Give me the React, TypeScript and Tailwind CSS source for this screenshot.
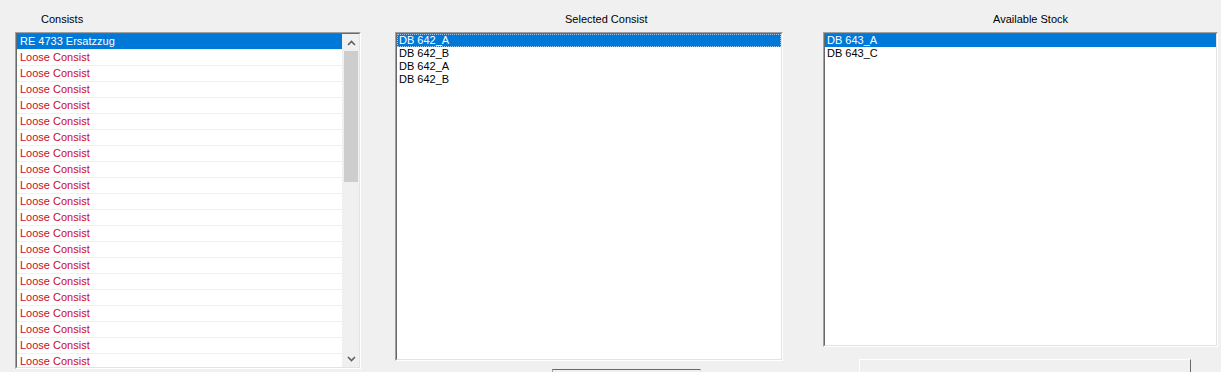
import React from "react";

const font = { fontFamily: '"Liberation Sans", Arial, sans-serif' };

function Sunken({ className, children }: { className: string; children: React.ReactNode }) {
  return (
    <div className={`border border-t-[#a0a0a0] border-l-[#a0a0a0] border-b-[#ffffff] border-r-[#ffffff] ${className}`}>
      <div className="h-full border border-t-[#696969] border-l-[#696969] border-b-[#e3e3e3] border-r-[#e3e3e3] bg-white overflow-hidden">
        {children}
      </div>
    </div>
  );
}

export default function App() {
  const loose = Array.from({ length: 20 });
  return (
    <div className="w-[1221px] h-[420px] bg-[#f0f0f0] text-[11px] text-black flex pl-[15px] pt-[12px]" style={font}>
      {/* Column 1 */}
      <div className="w-[346px] flex flex-col">
        <div className="h-[20px] pl-[26px] leading-[14px]">Consists</div>
        <Sunken className="h-[337px]">
          <div className="flex h-full">
            <div className="flex-1 flex flex-col">
              <div className="h-[16px] bg-[#0078d7] text-white pl-[3px] leading-[15px]">RE 4733 Ersatzzug</div>
              {loose.map((_, i) => (
                <div key={i} className="h-[16px] border-t border-[#f0f0f0] text-[#cc0a1e] pl-[3px] leading-[15px] shrink-0">
                  Loose Consist
                </div>
              ))}
            </div>
            <div className="w-[17px] bg-[#f0f0f0] flex flex-col border-l border-[#f0f0f0]">
              <div className="h-[17px] flex items-center justify-center">
                <svg width="9" height="6" viewBox="0 0 9 6"><path d="M1 5 L4.5 1.5 L8 5" stroke="#606060" strokeWidth="1.6" fill="none" /></svg>
              </div>
              <div className="mx-[1px] h-[131px] bg-[#cdcdcd]" />
              <div className="flex-1" />
              <div className="h-[17px] flex items-center justify-center">
                <svg width="9" height="6" viewBox="0 0 9 6"><path d="M1 1 L4.5 4.5 L8 1" stroke="#606060" strokeWidth="1.6" fill="none" /></svg>
              </div>
            </div>
          </div>
        </Sunken>
      </div>

      {/* Column 2 */}
      <div className="w-[388px] ml-[34px] flex flex-col">
        <div className="h-[20px] pl-[170px] leading-[14px]">Selected Consist</div>
        <Sunken className="h-[329px]">
          <div className="flex flex-col leading-[13px]">
            <div className="h-[13px] bg-[#0078d7] text-white pl-[2px] outline outline-1 outline-dotted outline-[#9ac8f0] -outline-offset-1">DB 642_A</div>
            <div className="h-[13px] pl-[2px]">DB 642_B</div>
            <div className="h-[13px] pl-[2px]">DB 642_A</div>
            <div className="h-[13px] pl-[2px]">DB 642_B</div>
          </div>
        </Sunken>
        <div className="flex mt-[8px]">
          <div className="pl-[7px] w-[157px] leading-[14px]">Train Name</div>
          <div className="w-[149px] h-[22px] border border-t-[#696969] border-l-[#a0a0a0] border-r-[#e3e3e3] border-b-[#e3e3e3] bg-[#f0f0f0]" />
        </div>
      </div>

      {/* Column 3 */}
      <div className="w-[395px] ml-[40px] flex flex-col">
        <div className="h-[20px] pl-[170px] leading-[14px]">Available Stock</div>
        <Sunken className="h-[315px]">
          <div className="flex flex-col leading-[13px]">
            <div className="h-[13px] bg-[#0078d7] text-white pl-[2px]">DB 643_A</div>
            <div className="h-[13px] pl-[2px]">DB 643_C</div>
          </div>
        </Sunken>
        <div className="ml-[36px] mt-[12px] w-[332px] h-[24px] border border-t-[#ffffff] border-l-[#ffffff] border-r-[#696969] border-b-[#696969] bg-[#f0f0f0]" />
      </div>
    </div>
  );
}
